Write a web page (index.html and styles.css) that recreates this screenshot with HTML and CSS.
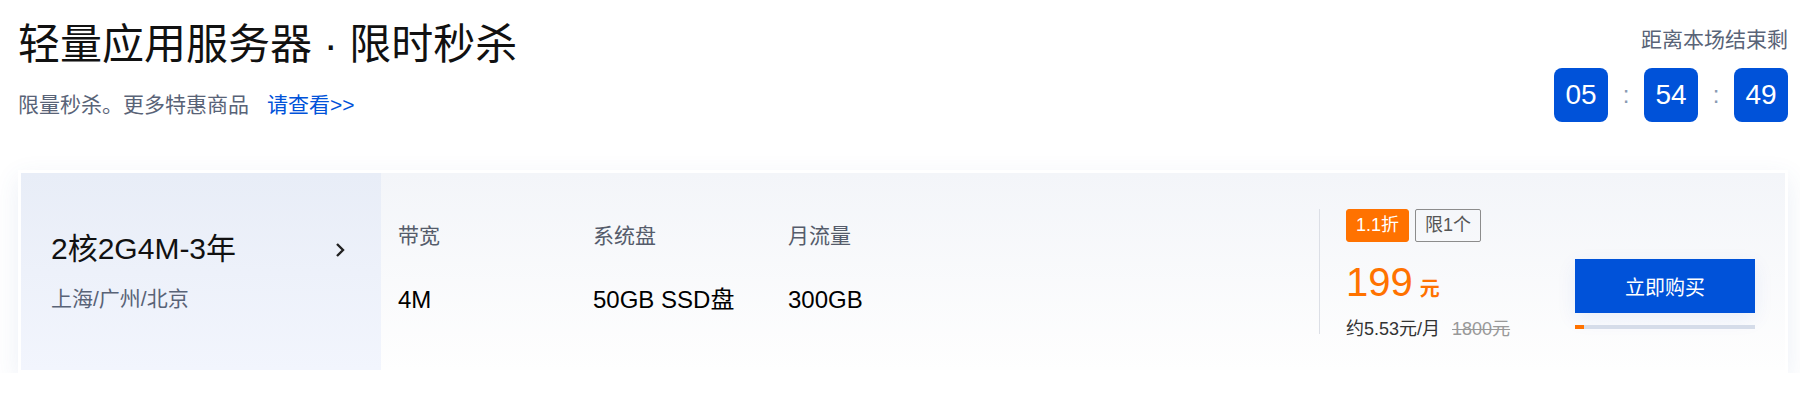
FILE: index.html
```html
<!DOCTYPE html>
<html lang="zh-CN">
<head>
    <meta charset="UTF-8">
    <meta name="viewport" content="width=device-width, initial-scale=1.0">
    <title>轻量应用服务器 · 限时秒杀</title>
    <link rel="stylesheet" href="styles.css">
</head>
<body>

    <div class="page">
        <div class="header">
            <div class="intro">
                <h1 class="title">轻量应用服务器 · 限时秒杀</h1>
                <p class="desc">限量秒杀。更多特惠商品<a class="more" href="#">请查看&gt;&gt;</a></p>
            </div>
            <div class="countdown">
                <div class="countdown-label">距离本场结束剩</div>
                <div class="countdown-time">
                    <span class="time-box" id="hours">05</span>
                    <span class="time-sep">:</span>
                    <span class="time-box" id="minutes">54</span>
                    <span class="time-sep">:</span>
                    <span class="time-box" id="seconds">49</span>
                </div>
            </div>
        </div>

        <div class="product-card">
            <div class="card-body">
                <div class="product-name">
                    <div>
                        <div class="name">2核2G4M-3年</div>
                        <div class="region">上海/广州/北京</div>
                    </div>
                    <svg class="chevron" width="10" height="16" viewBox="0 0 10 16">
                        <path d="M2 2 L8 8 L2 14" fill="none" stroke="#222" stroke-width="2.4"/>
                    </svg>
                </div>

                <div class="product-specs">
                    <div class="spec">
                        <div class="spec-label">带宽</div>
                        <div class="spec-value">4M</div>
                    </div>
                    <div class="spec">
                        <div class="spec-label">系统盘</div>
                        <div class="spec-value">50GB SSD盘</div>
                    </div>
                    <div class="spec">
                        <div class="spec-label">月流量</div>
                        <div class="spec-value">300GB</div>
                    </div>
                </div>

                <div class="product-price">
                    <div class="tags">
                        <span class="tag tag-discount">1.1折</span>
                        <span class="tag tag-limit">限1个</span>
                    </div>
                    <div class="price">
                        <span class="price-num">199</span><span class="price-unit">元</span>
                    </div>
                    <div class="price-note">约5.53元/月<s class="price-old">1800元</s></div>
                </div>

                <div class="product-buy">
                    <button class="buy-btn">立即购买</button>
                    <div class="progress"><div class="progress-bar" style="width: 5%"></div></div>
                </div>
            </div>
        </div>
    </div>

</body>
</html>
```

FILE: styles.css
```css
body {
    margin: 0;
    font-family: "Liberation Sans", "Noto Sans CJK SC", sans-serif;
    color: #111;
    background: #fff;
}
.page {
    padding: 0 12px 0 18px;
}

/* header */
.header {
    display: flex;
    justify-content: space-between;
    align-items: flex-start;
    padding-top: 20px;
}
.title {
    margin: 0;
    font-size: 42px;
    line-height: 50px;
    font-weight: normal;
    color: #111;
}
.desc {
    margin: 20px 0 0;
    font-size: 21px;
    line-height: 30px;
    color: #596377;
}
.more {
    margin-left: 18px;
    color: #0052d9;
    text-decoration: none;
}
.countdown {
    padding-top: 5px;
    text-align: right;
}
.countdown-label {
    font-size: 21px;
    line-height: 30px;
    color: #596377;
}
.countdown-time {
    display: flex;
    align-items: center;
    margin-top: 13px;
}
.time-box {
    width: 54px;
    height: 54px;
    border-radius: 8px;
    background: #0052d9;
    color: #fff;
    font-size: 28px;
    line-height: 54px;
    text-align: center;
}
.time-sep {
    width: 36px;
    text-align: center;
    font-size: 24px;
    color: #8a9bb3;
}

/* product card */
.product-card {
    margin-top: 48px;
    padding: 3px;
    background: #fff;
    box-shadow: 0 8px 24px rgba(55, 99, 170, 0.1);
}
.card-body {
    display: flex;
    height: 197px;
    background: linear-gradient(180deg, #f3f5f9, #fefefe);
}
.product-name {
    width: 360px;
    flex: none;
    box-sizing: border-box;
    padding: 0 36px 0 30px;
    display: flex;
    align-items: center;
    justify-content: space-between;
    background: linear-gradient(180deg, #e8edf7, #f2f5fd);
}
.name {
    font-size: 30px;
    line-height: 36px;
}
.region {
    margin-top: 18px;
    font-size: 21px;
    line-height: 28px;
    color: #596377;
}
.chevron {
    margin-top: -44px;
}
.product-specs {
    flex: 1;
    display: flex;
    align-items: center;
    padding: 0 0 7px 17px;
}
.spec {
    width: 195px;
}
.spec-label {
    font-size: 21px;
    line-height: 28px;
    color: #555c6b;
}
.spec-value {
    margin-top: 36px;
    font-size: 24px;
    line-height: 28px;
    color: #000;
}

/* price */
.product-price {
    width: 256px;
    flex: none;
    box-sizing: border-box;
    align-self: center;
    height: 125px;
    padding-left: 26px;
    border-left: 1px solid #dcdfe6;
}
.tags {
    display: flex;
    gap: 6px;
}
.tag {
    height: 33px;
    box-sizing: border-box;
    padding: 0 9px;
    font-size: 18px;
    line-height: 31px;
    border-radius: 3px;
}
.tag-discount {
    background: #ff7200;
    border: 1px solid #ff7200;
    color: #fff;
}
.tag-limit {
    border: 1px solid #8c8c8c;
    color: #555;
    border-radius: 2px;
}
.price {
    margin-top: 20px;
    color: #ff7200;
    line-height: 40px;
}
.price-num {
    font-size: 40px;
}
.price-unit {
    margin-left: 7px;
    font-size: 20px;
    font-weight: bold;
}
.price-note {
    margin-top: 6px;
    font-size: 18px;
    line-height: 24px;
    color: #333;
}
.price-old {
    margin-left: 12px;
    color: #999;
}

/* buy */
.product-buy {
    width: 210px;
    flex: none;
    box-sizing: border-box;
    padding-right: 30px;
    align-self: center;
    margin-top: 45px;
}
.buy-btn {
    display: block;
    width: 180px;
    height: 54px;
    border: none;
    background: #0052d9;
    color: #fff;
    font-family: inherit;
    font-size: 20px;
    cursor: pointer;
    box-shadow: 0 6px 20px rgba(0, 82, 217, 0.08);
}
.progress {
    margin-top: 12px;
    height: 4px;
    background: #d5dce9;
}
.progress-bar {
    height: 100%;
    background: #ff7200;
}
```
